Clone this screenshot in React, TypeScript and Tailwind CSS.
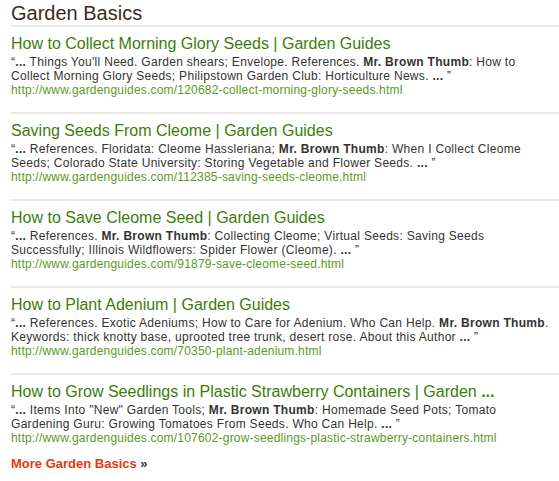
import React from "react";

type Item = {
  title: React.ReactNode;
  snippet: React.ReactNode;
  url: string;
};

const MBT = (
  <>
    <b>Mr.</b> <b>Brown Thumb</b>
  </>
);

const items: Item[] = [
  {
    title: "How to Collect Morning Glory Seeds | Garden Guides",
    snippet: (
      <>
        “<b>...</b> Things You'll Need. Garden shears; Envelope. References. {MBT}: How to Collect Morning Glory Seeds; Philipstown Garden Club: Horticulture News. <b>...</b> ”
      </>
    ),
    url: "http://www.gardenguides.com/120682-collect-morning-glory-seeds.html",
  },
  {
    title: "Saving Seeds From Cleome | Garden Guides",
    snippet: (
      <>
        “<b>...</b> References. Floridata: Cleome Hassleriana; {MBT}: When I Collect Cleome Seeds; Colorado State University: Storing Vegetable and Flower Seeds. <b>...</b> ”
      </>
    ),
    url: "http://www.gardenguides.com/112385-saving-seeds-cleome.html",
  },
  {
    title: "How to Save Cleome Seed | Garden Guides",
    snippet: (
      <>
        “<b>...</b> References. {MBT}: Collecting Cleome; Virtual Seeds: Saving Seeds Successfully; Illinois Wildflowers: Spider Flower (Cleome). <b>...</b> ”
      </>
    ),
    url: "http://www.gardenguides.com/91879-save-cleome-seed.html",
  },
  {
    title: "How to Plant Adenium | Garden Guides",
    snippet: (
      <>
        “<b>...</b> References. Exotic Adeniums; How to Care for Adenium. Who Can Help. {MBT}. Keywords: thick knotty base, uprooted tree trunk, desert rose. About this Author <b>...</b> ”
      </>
    ),
    url: "http://www.gardenguides.com/70350-plant-adenium.html",
  },
  {
    title: (
      <>
        How to Grow Seedlings in Plastic Strawberry Containers | Garden <b>...</b>
      </>
    ),
    snippet: (
      <>
        “<b>...</b> Items Into "New" Garden Tools; {MBT}: Homemade Seed Pots; Tomato Gardening Guru: Growing Tomatoes From Seeds. Who Can Help. <b>...</b> ”
      </>
    ),
    url: "http://www.gardenguides.com/107602-grow-seedlings-plastic-strawberry-containers.html",
  },
];

export default function App() {
  return (
    <div
      className="w-[559px] h-[481px] bg-white pl-[11px] overflow-hidden"
      style={{ fontFamily: '"Liberation Sans", Arial, sans-serif' }}
    >
      <h2 className="text-[20px] leading-[24px] text-[#3b2a1e] pt-[1px] font-normal">
        Garden Basics
      </h2>
      {items.map((it, i) => (
        <div
          key={i}
          className={
            "border-t-2 border-[#e8e8e8] pt-[8px] " +
            (i === items.length - 1 ? "pb-[11px]" : "pb-[15px]")
          }
        >
          <div className="text-[16px] leading-[18px] text-[#3b7d0a]">{it.title}</div>
          <div className="mt-[2px] pr-[8px] text-[12px] leading-[14px] tracking-[0.3px] text-[#333333]">
            {it.snippet}
          </div>
          <div className="text-[12px] leading-[14px] tracking-[0.2px] text-[#5b9a1e]">{it.url}</div>
        </div>
      ))}
      <div className="text-[13px] leading-[16px] font-bold text-[#e33a10]">
        More Garden Basics <span className="text-[#333333]">»</span>
      </div>
    </div>
  );
}
